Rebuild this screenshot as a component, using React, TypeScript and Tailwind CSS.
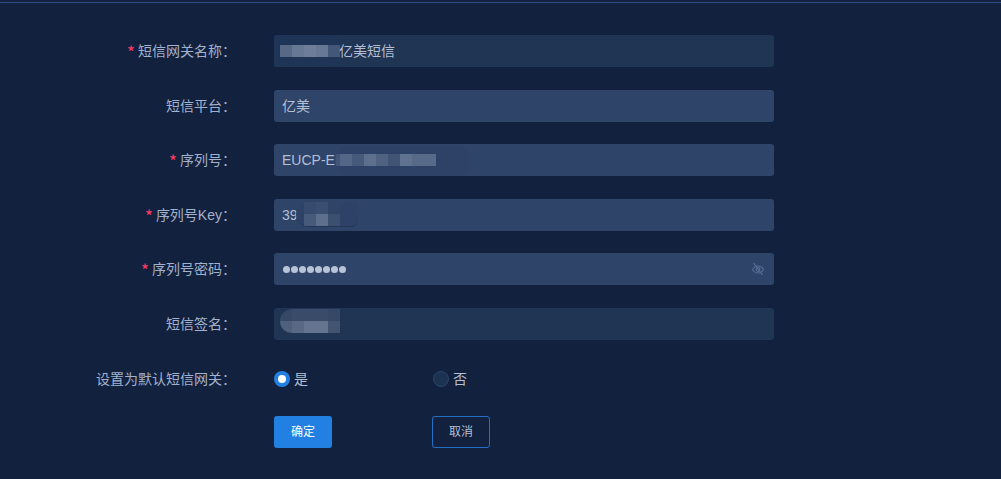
import React from "react";

const font = { fontFamily: '"Liberation Sans","Noto Sans CJK SC",sans-serif' };

function Mosaic({ cells, className }: { cells: number[][]; className: string }) {
  return (
    <div className={"absolute flex flex-col " + className}>
      {cells.map((row, i) => (
        <div key={i} className="flex">
          {row.map((a, j) => (
            <div key={j} className="w-3 h-3" style={{ backgroundColor: `rgba(190,200,220,${a})` }} />
          ))}
        </div>
      ))}
    </div>
  );
}

function Row({
  label,
  required,
  children,
  rowClass,
}: {
  label: string;
  required?: boolean;
  children: React.ReactNode;
  rowClass?: string;
}) {
  return (
    <div className={"flex items-center " + (rowClass ?? "")}>
      <div className="w-[236px] h-5 leading-5 text-right text-sm text-[#a3b1cc] whitespace-nowrap">
        {required && (
          <span className="text-[#ff3a66] text-[17px] leading-none align-[-3px] mr-[3px] font-['Noto_Sans_CJK_SC']">*</span>
        )}
        {label}：
      </div>
      <div className="ml-[38px]">{children}</div>
    </div>
  );
}

function Field({
  value,
  light,
  children,
}: {
  value?: string;
  light?: boolean;
  children?: React.ReactNode;
}) {
  return (
    <div
      className={
        "relative w-[500px] h-8 rounded-[3px] px-2 flex items-center text-sm text-[#b4bfd4] overflow-hidden " +
        (light ? "bg-[#203453]" : "bg-[#2f4469]")
      }
    >
      {value}
      {children}
    </div>
  );
}

export default function App() {
  return (
    <div className="w-[1001px] h-[479px] bg-[#12213e] overflow-hidden" style={font}>
      <div className="h-[2px] bg-[#12213e]" />
      <div className="h-px bg-[#2f4c85]" />
      <div className="pt-8 flex flex-col gap-[22.5px]">
        <Row label="短信网关名称" required>
          <Field light>
            <div className="absolute left-0 top-0 h-8 w-[70px] rounded-r-2xl bg-[#1e3558]" />
            <Mosaic className="left-1.5 top-[10px]" cells={[[0.36, 0.46, 0.5, 0.46, 0.24]]} />
            <div className="absolute left-[65px] top-0 h-8 flex items-center">亿美短信</div>
          </Field>
        </Row>
        <Row label="短信平台">
          <Field value="亿美" />
        </Row>
        <Row label="序列号" required>
          <Field value="EUCP-EM">
            <div className="absolute left-[62px] top-[2px] h-[30px] w-[135px] rounded-xl bg-[#2d4266]" />
            <div className="absolute left-[62px] top-[10px] w-1 h-3 bg-[#43567a]" />
            <Mosaic className="left-[66px] top-[10px]" cells={[[0.28, 0.18, 0.34, 0.24, 0.14, 0.36, 0.3, 0.3]]} />
          </Field>
        </Row>
        <Row label="序列号Key" required>
          <Field value="39">
            <div className="absolute left-[22px] top-[3px] h-[25px] w-[62px] rounded-l-2xl rounded-r-lg bg-[#2d4266] border-b border-[#233656]" />
            <Mosaic
              className="left-[30px] top-[3px]"
              cells={[
                [0.07, 0.09, 0.02, 0],
                [0.18, 0.34, 0.1, 0],
              ]}
            />
          </Field>
        </Row>
        <Row label="序列号密码" required>
          <Field>
            <span className="mt-px flex">
              {Array.from({ length: 8 }).map((_, i) => (
                <span key={i} className="w-[8px] flex justify-center">
                  <span className="block w-[7px] h-[7px] shrink-0 rounded-full bg-[#b9c4d8]" />
                </span>
              ))}
            </span>
            <svg
              className="absolute right-[9px] top-[9px]"
              width="14"
              height="14"
              viewBox="0 0 14 14"
              fill="none"
              stroke="#566d95"
              strokeWidth="1.2"
            >
              <path d="M1.5 7.5C3 5 5 4 7 4s4 1 5.5 3.5C11 10 9 11 7 11S3 10 1.5 7.5Z" />
              <circle cx="7" cy="7.5" r="1.8" />
              <path d="M2.5 1l9 12" />
            </svg>
          </Field>
        </Row>
        <Row label="短信签名">
          <Field light>
            <div className="absolute left-1.5 top-px h-6 w-[60px] rounded-l-xl overflow-hidden">
              <Mosaic
                className="left-0 top-0"
                cells={[
                  [0.14, 0.16, 0.16, 0.16, 0.14],
                  [0.3, 0.36, 0.44, 0.44, 0.22],
                ]}
              />
            </div>
          </Field>
        </Row>
        <Row label="设置为默认短信网关" rowClass="h-4 mt-[8.5px]">
          <div className="flex text-sm text-[#b4bfd4]">
            <label className="w-[159px] flex items-center gap-1">
              <span className="w-4 h-4 rounded-full bg-[#2280e3] flex items-center justify-center">
                <span className="w-2 h-2 rounded-full bg-white" />
              </span>
              是
            </label>
            <label className="flex items-center gap-1">
              <span className="w-4 h-4 rounded-full bg-[#1c3253] border border-[#2b4469]" />
              否
            </label>
          </div>
        </Row>
        <div className="flex ml-[274px] mt-[7px] text-xs">
          <button className="w-[58px] h-8 rounded-[3px] bg-[#2280e3] text-white">确定</button>
          <button className="ml-[100px] w-[58px] h-8 rounded-[3px] border border-[#2270c4] text-[#b4bfd4]">
            取消
          </button>
        </div>
      </div>
    </div>
  );
}
